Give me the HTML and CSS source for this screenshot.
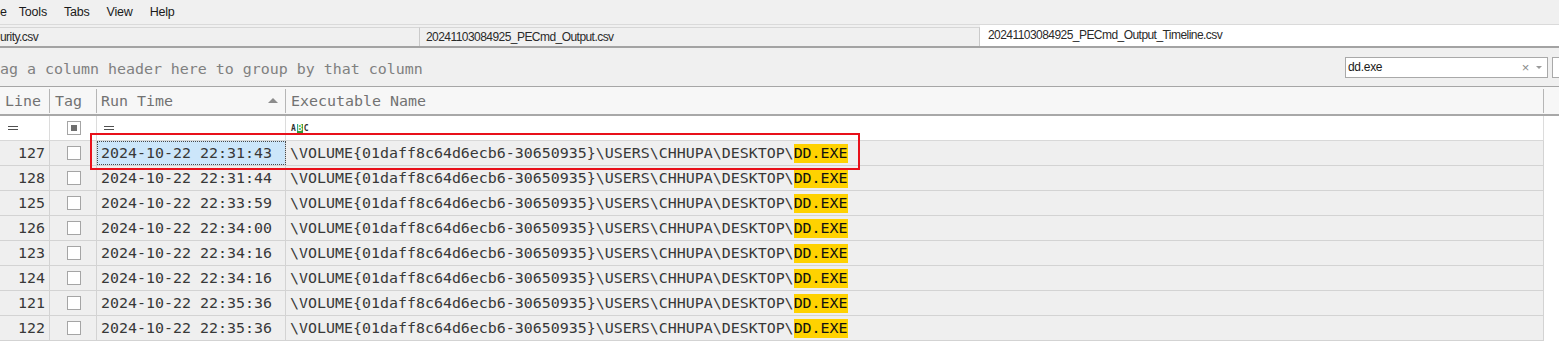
FILE: index.html
```html
<!DOCTYPE html>
<html lang="en">
<head>
    <meta charset="UTF-8">
    <title>Timeline Explorer</title>
    <link rel="stylesheet" href="styles.css">
</head>
<body>
    <div class="menubar">
        <span class="menu-item first">e</span>
        <span class="menu-item">Tools</span>
        <span class="menu-item">Tabs</span>
        <span class="menu-item">View</span>
        <span class="menu-item">Help</span>
    </div>
    <div class="tabstrip">
        <div class="tab tab-one">urity.csv</div>
        <div class="tab tab-two">20241103084925_PECmd_Output.csv</div>
        <div class="tab active">20241103084925_PECmd_Output_Timeline.csv</div>
    </div>
    <div class="grouppanel">
        <span class="group-hint">ag a column header here to group by that column</span>
        <div class="search">
            <div class="search-box">
                <span class="search-text">dd.exe</span>
                <span class="search-clear">×</span>
                <span class="search-drop"></span>
            </div>
            <div class="search-next"></div>
        </div>
    </div>

    <div class="grid">
        <div class="hdr">
            <div class="hcell">Line</div>
            <div class="hcell">Tag</div>
            <div class="hcell sorted">Run Time <span class="sort-up"></span></div>
            <div class="hcell">Executable Name</div>
            <div class="hfill"></div>
        </div>
        <div class="row filter">
            <div class="cell"><span class="eq"></span></div>
            <div class="cell center"><span class="check partial"></span></div>
            <div class="cell run"><span class="eq"></span></div>
            <div class="cell"><span class="abc">A<b>B</b>C</span></div>
        </div>

        <div class="row">
            <div class="cell num">127</div>
            <div class="cell center"><span class="check"></span></div>
            <div class="cell sel">2024-10-22 22:31:43</div>
            <div class="cell">\VOLUME{01daff8c64d6ecb6-30650935}\USERS\CHHUPA\DESKTOP\<span class="hit">DD.EXE</span></div>
        </div>
        <div class="row">
            <div class="cell num">128</div>
            <div class="cell center"><span class="check"></span></div>
            <div class="cell">2024-10-22 22:31:44</div>
            <div class="cell">\VOLUME{01daff8c64d6ecb6-30650935}\USERS\CHHUPA\DESKTOP\<span class="hit">DD.EXE</span></div>
        </div>
        <div class="row">
            <div class="cell num">125</div>
            <div class="cell center"><span class="check"></span></div>
            <div class="cell">2024-10-22 22:33:59</div>
            <div class="cell">\VOLUME{01daff8c64d6ecb6-30650935}\USERS\CHHUPA\DESKTOP\<span class="hit">DD.EXE</span></div>
        </div>
        <div class="row">
            <div class="cell num">126</div>
            <div class="cell center"><span class="check"></span></div>
            <div class="cell">2024-10-22 22:34:00</div>
            <div class="cell">\VOLUME{01daff8c64d6ecb6-30650935}\USERS\CHHUPA\DESKTOP\<span class="hit">DD.EXE</span></div>
        </div>
        <div class="row">
            <div class="cell num">123</div>
            <div class="cell center"><span class="check"></span></div>
            <div class="cell">2024-10-22 22:34:16</div>
            <div class="cell">\VOLUME{01daff8c64d6ecb6-30650935}\USERS\CHHUPA\DESKTOP\<span class="hit">DD.EXE</span></div>
        </div>
        <div class="row">
            <div class="cell num">124</div>
            <div class="cell center"><span class="check"></span></div>
            <div class="cell">2024-10-22 22:34:16</div>
            <div class="cell">\VOLUME{01daff8c64d6ecb6-30650935}\USERS\CHHUPA\DESKTOP\<span class="hit">DD.EXE</span></div>
        </div>
        <div class="row">
            <div class="cell num">121</div>
            <div class="cell center"><span class="check"></span></div>
            <div class="cell">2024-10-22 22:35:36</div>
            <div class="cell">\VOLUME{01daff8c64d6ecb6-30650935}\USERS\CHHUPA\DESKTOP\<span class="hit">DD.EXE</span></div>
        </div>
        <div class="row">
            <div class="cell num">122</div>
            <div class="cell center"><span class="check"></span></div>
            <div class="cell">2024-10-22 22:35:36</div>
            <div class="cell">\VOLUME{01daff8c64d6ecb6-30650935}\USERS\CHHUPA\DESKTOP\<span class="hit">DD.EXE</span></div>
        </div>

        <!-- red annotation box drawn over the first row -->
        <div class="mark"></div>
    </div>
</body>
</html>
```

FILE: styles.css
```css
body {
    margin: 0;
    padding: 0;
    background-color: #fff;
    font-family: "Liberation Sans", Arial, sans-serif;
    overflow: hidden;
}

.menubar {
    display: flex;
    align-items: center;
    gap: 17px;
    height: 24px;
    background-color: #f0f0f0;
    border-bottom: 1px solid #dadada;
    font-size: 12.5px;
    letter-spacing: -0.2px;
    color: #1a1a1a;
}
.menu-item.first {
    margin-right: -5px;
}

.tabstrip {
    display: flex;
    align-items: flex-end;
    height: 21px;
    background-color: #f0f0f0;
    border-bottom: 2px solid #a3a3a3;
    font-size: 12px;
    letter-spacing: -0.55px;
    color: #2a2a2a;
}
.tab {
    box-sizing: border-box;
    height: 19px;
    line-height: 18px;
    border-top: 1px solid #d6d6d6;
    border-right: 1px solid #cacaca;
    white-space: nowrap;
    overflow: hidden;
}
.tab-one {
    width: 420px;
}
.tab-two {
    width: 560px;
    padding-left: 6px;
}
.tab.active {
    flex: 1;
    height: 21px;
    line-height: 21px;
    padding-left: 8px;
    background-color: #fff;
    border-top: none;
    border-right: none;
}

.grouppanel {
    display: flex;
    align-items: center;
    justify-content: space-between;
    height: 38px;
    background-color: #f0f0f0;
    border-bottom: 1px solid #a6a6a6;
}
.group-hint {
    font-family: "DejaVu Sans Mono", monospace;
    font-size: 14.95px;
    color: #808080;
    padding-top: 3px;
}
.search {
    display: flex;
    gap: 4px;
    margin-right: -23px;
}
.search-box {
    box-sizing: border-box;
    display: flex;
    align-items: center;
    width: 203px;
    height: 21px;
    background-color: #fff;
    border: 1px solid #a9a9a9;
    font-size: 12px;
    letter-spacing: -0.3px;
    color: #1a1a1a;
}
.search-text {
    flex: 1;
    padding-left: 2px;
}
.search-clear {
    color: #8a8a8a;
    font-size: 13px;
    margin-right: 7px;
}
.search-drop {
    width: 0;
    height: 0;
    border-left: 3px solid transparent;
    border-right: 3px solid transparent;
    border-top: 3px solid #9a9a9a;
    margin-right: 5px;
}
.search-next {
    box-sizing: border-box;
    width: 30px;
    height: 21px;
    background-color: #fff;
    border: 1px solid #a9a9a9;
}

/* grid */
.grid {
    position: relative;
    font-family: "DejaVu Sans Mono", monospace;
    font-size: 14.95px;
}
.hdr {
    box-sizing: border-box;
    display: grid;
    grid-template-columns: 50px 47px 189px 1258px 1fr;
    height: 29px;
    padding: 2px 0 1px;
    background-color: #f7f7f7;
    border-bottom: 2px solid #a8a8a8;
    color: #727272;
}
.hcell {
    display: flex;
    align-items: center;
    padding-left: 5px;
    border-right: 1px solid #b6b6b6;
    white-space: nowrap;
}
.hcell.sorted {
    justify-content: space-between;
    padding-left: 4px;
    padding-right: 7px;
}
.sort-up {
    width: 0;
    height: 0;
    border-left: 5px solid transparent;
    border-right: 5px solid transparent;
    border-bottom: 5px solid #8c8c8c;
    margin-top: -2px;
}

.row {
    box-sizing: border-box;
    display: grid;
    grid-template-columns: 50px 47px 189px 1258px;
    width: 1544px;
    height: 25px;
    background-color: #efefef;
    border-bottom: 1px solid #d3d3d3;
    color: #383838;
}
.row.filter {
    background-color: #fff;
    border-bottom-color: #d8d8d8;
}
.cell {
    box-sizing: border-box;
    display: flex;
    align-items: center;
    padding-left: 4px;
    border-right: 1px solid #d3d3d3;
    white-space: nowrap;
    overflow: hidden;
}
.filter .cell {
    border-right-color: #dcdcdc;
    padding-left: 8px;
}
.filter .cell.run {
    padding-left: 7px;
}
.filter .cell:last-child {
    padding-left: 5px;
}
.cell.num {
    justify-content: flex-end;
    padding-right: 4px;
}
.cell.center {
    justify-content: center;
    padding-left: 0;
}
.cell.sel {
    background-color: #cce6fa;
    outline: 1px dotted #4a4a4a;
    outline-offset: -1px;
}

.check {
    box-sizing: border-box;
    display: flex;
    align-items: center;
    justify-content: center;
    width: 14px;
    height: 14px;
    background-color: #fff;
    border: 1px solid #a5a5a5;
    margin-left: 1px;
}
.check.partial::before {
    content: "";
    width: 6px;
    height: 6px;
    background-color: #6f6f6f;
}
.eq {
    box-sizing: border-box;
    width: 10px;
    height: 4px;
    border-top: 1px solid #505050;
    border-bottom: 1px solid #505050;
}
.abc {
    display: flex;
    font-family: "DejaVu Sans Mono", monospace;
    font-size: 8px;
    font-weight: bold;
    line-height: 10px;
    color: #333;
    margin-top: 2px;
}
.abc b {
    display: inline-block;
    width: 6px;
    text-align: center;
    margin: 0 1px;
    background-color: #2f9b3c;
    color: #fff;
}
.hit {
    display: inline-block;
    line-height: 19px;
    background-color: #ffd200;
    color: #111;
}

.mark {
    position: absolute;
    left: 90px;
    top: 46px;
    width: 770px;
    height: 37px;
    box-sizing: border-box;
    border: 2px solid #e8101a;
}
```
